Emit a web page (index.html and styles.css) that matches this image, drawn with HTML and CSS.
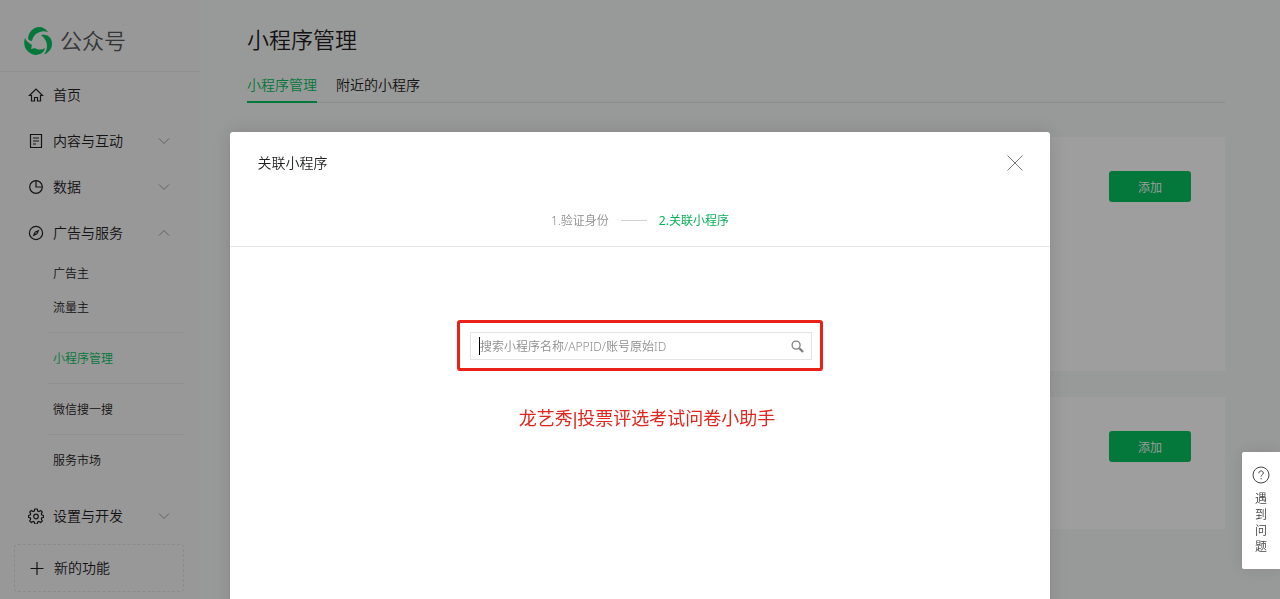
FILE: index.html
```
<!DOCTYPE html>
<html lang="zh-CN">

<head>
     <meta charset="UTF-8">
     <meta name="viewport" content="width=device-width, initial-scale=1.0">
     <title>公众号</title>
     <link rel="stylesheet" href="styles.css">
</head>

<body>

     <div class="layout">
          <aside class="sidebar">
               <a class="logo" href="#">
                    <svg class="logo-icon" viewBox="0 0 28 28">
                         <path d="M4 11C5 4 10 0 15 0c4 0 7 2 9 5-3-1-6-1-8 0C12 6 9 9 8 14 6 14 4 13 4 11z" />
                         <path d="M17 8c4-1 8 0 10 4 2 5 1 10-3 13-1 1-2 2-4 2 2-2 3-5 3-8 0-4-2-8-6-11z" />
                         <path d="M1 11c-2 7 0 12 5 15 4 3 9 2 12 0 2-2 3-4 3-5-3 2-7 2-10 0l-4 1 1-4C5 16 2 14 1 11z" />
                    </svg>
                    <span>公众号</span>
               </a>

               <nav>
                    <a class="menu-item" href="#">
                         <svg class="menu-icon" viewBox="0 0 16 16">
                              <path d="M1.500 8.500 8 2l6.500 6.500H12.500V14H9.500V10.500H6.500V14H3.500V8.500z" />
                         </svg>
                         <span>首页</span>
                    </a>
                    <a class="menu-item" href="#">
                         <svg class="menu-icon" viewBox="0 0 16 16">
                              <path d="M2.500 1.500h11v13h-11zM5 5h6M5 8h6M5 11h3" />
                         </svg>
                         <span>内容与互动</span>
                         <svg class="arrow" viewBox="0 0 12 8"><path d="M1 1.500 6 6.500 11 1.500" /></svg>
                    </a>
                    <a class="menu-item" href="#">
                         <svg class="menu-icon" viewBox="0 0 16 16">
                              <circle cx="8" cy="8" r="6.300" />
                              <path d="M8 1.700V8h6.300" />
                         </svg>
                         <span>数据</span>
                         <svg class="arrow" viewBox="0 0 12 8"><path d="M1 1.500 6 6.500 11 1.500" /></svg>
                    </a>
                    <a class="menu-item" href="#">
                         <svg class="menu-icon" viewBox="0 0 16 16">
                              <circle cx="8" cy="8" r="6.600" />
                              <path class="fill" d="M11.500 4.500 9.300 9.300 4.500 11.500 6.700 6.700z" />
                              <circle class="dot" cx="8" cy="8" r="0.800" />
                         </svg>
                         <span>广告与服务</span>
                         <svg class="arrow" viewBox="0 0 12 8"><path d="M1 6.500 6 1.500 11 6.500" /></svg>
                    </a>

                    <div class="sub-menu">
                         <div class="sub-group">
                              <a class="sub-item" href="#">广告主</a>
                              <a class="sub-item" href="#">流量主</a>
                         </div>
                         <div class="sub-group">
                              <a class="sub-item active" href="#">小程序管理</a>
                         </div>
                         <div class="sub-group">
                              <a class="sub-item" href="#">微信搜一搜</a>
                         </div>
                         <div class="sub-group">
                              <a class="sub-item" href="#">服务市场</a>
                         </div>
                    </div>

                    <a class="menu-item" href="#">
                         <svg class="menu-icon" viewBox="0 0 16 16">
                              <path d="M6.800 1h2.400l.5 2 1.200.500 1.800-1.100 1.600 1.700-1 1.700.5 1.200 1.900.500v1.800l-1.900.500-.5 1.200 1 1.800-1.600 1.600-1.800-1-1.200.500-.5 2.100H6.800l-.5-2.100-1.200-.500-1.800 1-1.600-1.600 1-1.800-.5-1.200-1.900-.500V7.500L2.200 7l.5-1.200-1-1.700 1.600-1.700 1.800 1.100L6.300 3z" />
                              <circle cx="8" cy="8.500" r="2.300" />
                         </svg>
                         <span>设置与开发</span>
                         <svg class="arrow" viewBox="0 0 12 8"><path d="M1 1.500 6 6.500 11 1.500" /></svg>
                    </a>
                    <a class="new-feature" href="#">
                         <svg class="menu-icon" viewBox="0 0 16 16"><path d="M8 2v13M1.500 8.500h13" /></svg>
                         <span>新的功能</span>
                    </a>
               </nav>
          </aside>

          <main class="main">
               <h1 class="page-title">小程序管理</h1>
               <div class="tabs">
                    <a class="tab active" href="#">小程序管理</a>
                    <a class="tab" href="#">附近的小程序</a>
               </div>
               <section class="card card-large">
                    <button class="btn-add" type="button">添加</button>
               </section>
               <section class="card">
                    <button class="btn-add" type="button">添加</button>
               </section>
          </main>
     </div>

     <div class="mask">
          <div class="dialog" role="dialog" aria-labelledby="dialog-title">
               <div class="dialog-header">
                    <h2 id="dialog-title">关联小程序</h2>
                    <button class="btn-close" type="button" aria-label="关闭">
                         <svg viewBox="0 0 16 16"><path d="M.5.5l15 15M15.500.5l-15 15" /></svg>
                    </button>
               </div>

               <div class="steps">
                    <span>1.验证身份</span>
                    <span class="step-line"></span>
                    <span class="current">2.关联小程序</span>
               </div>

               <div class="dialog-body">
                    <div class="highlight">
                         <div class="search-box">
                              <input class="search-input" type="text" placeholder="搜索小程序名称/APPID/账号原始ID" aria-label="搜索小程序">
                              <button class="btn-search" type="button" aria-label="搜索">
                                   <svg viewBox="0 0 14 14">
                                        <circle cx="5.500" cy="5.500" r="4.300" />
                                        <path class="handle" d="M9 9l4 4" />
                                   </svg>
                              </button>
                         </div>
                    </div>
                    <p class="note">龙艺秀|投票评选考试问卷小助手</p>
               </div>
          </div>
     </div>

     <a class="help" href="#">
          <svg viewBox="0 0 18 18">
               <circle cx="9" cy="9" r="8" />
               <path d="M6.800 7.200c0-3 4.500-3 4.500-.2 0 1.600-2.200 1.800-2.200 3.600M9.100 12v1.300" />
          </svg>
          <span>遇到问题</span>
     </a>

</body>

</html>
```
FILE: styles.css
```
* {
     box-sizing: border-box;
     margin: 0;
     padding: 0;
}

body {
     height: 100vh;
     overflow: hidden;
     font-family: "Noto Sans", "Noto Sans CJK SC", sans-serif;
     font-size: 14px;
     font-weight: 350;
     color: #1f2021;
     background-color: #f6f8f7;
}

a {
     color: inherit;
     text-decoration: none;
}

button,
input {
     font-family: inherit;
     font-weight: inherit;
}

button {
     border: none;
     background: none;
     cursor: pointer;
}

svg {
     display: block;
     fill: none;
     stroke: currentColor;
}

.layout {
     display: flex;
}

/* sidebar */
.sidebar {
     flex: 0 0 200px;
     min-height: 100vh;
     background-color: #f5f6f7;
}

.logo {
     display: flex;
     align-items: center;
     gap: 8px;
     height: 72px;
     padding: 10px 0 0 24px;
     border-bottom: 1px solid #e7e8e9;
     font-size: 22px;
     color: #55585a;
}

.logo span {
     padding-bottom: 3px;
}

.logo-icon {
     width: 28px;
     height: 28px;
     fill: #07c160;
     stroke: none;
}

.menu-item {
     display: flex;
     align-items: center;
     gap: 9px;
     height: 46px;
     padding: 0 30px 0 28px;
}

.menu-item span {
     padding-bottom: 2px;
}

.menu-icon {
     width: 16px;
     height: 16px;
     stroke-width: 1.2;
}

.menu-icon .fill {
     fill: currentColor;
     stroke: none;
}

.menu-icon .dot {
     fill: #f5f6f7;
     stroke: none;
}

.arrow {
     width: 12px;
     height: 8px;
     margin-left: auto;
     color: #9a9b9c;
}

.sub-menu {
     margin: 0 16px 8px 48px;
     font-size: 12px;
}

.sub-group {
     padding: 9px 0 7px 5px;
     border-top: 1px solid #e7e8e9;
}

.sub-group:first-child {
     padding-top: 1px;
     border-top: none;
}

.sub-item {
     display: block;
     line-height: 34px;
}

.sub-item.active {
     color: #07c160;
}

.new-feature {
     display: flex;
     align-items: center;
     gap: 9px;
     height: 48px;
     margin: 5px 16px 0 14px;
     padding-left: 14px;
     border: 1px dashed #dfe0e1;
     border-radius: 4px;
}

.new-feature span {
     padding-bottom: 2px;
}

/* main */
.main {
     flex: 1;
     padding: 23px 55px 0 47px;
}

.page-title {
     font-size: 22px;
     font-weight: 350;
     line-height: 32px;
}

.tabs {
     display: flex;
     gap: 19px;
     margin-top: 13px;
     border-bottom: 1px solid #e0e2e1;
}

.tab {
     height: 35px;
     margin-bottom: -1px;
     line-height: 33px;
}

.tab.active {
     color: #07c160;
     border-bottom: 2px solid #07c160;
}

.card {
     display: flex;
     justify-content: flex-end;
     align-items: flex-start;
     min-height: 132px;
     margin-top: 26px;
     padding: 34px;
     background-color: #fff;
}

.card-large {
     min-height: 234px;
     margin-top: 34px;
}

.btn-add {
     width: 82px;
     height: 31px;
     border-radius: 3px;
     font-size: 12px;
     color: #fff;
     background-color: #07c160;
}

/* dialog */
.mask {
     position: fixed;
     inset: 0;
     padding-top: 132px;
     overflow: hidden;
     background-color: rgba(0, 0, 0, .38);
}

.dialog {
     width: 64%;
     min-height: 100vh;
     margin: 0 auto;
     border-radius: 3px;
     background-color: #fff;
     box-shadow: 0 0 20px rgba(0, 0, 0, .15);
}

.dialog-header {
     display: flex;
     justify-content: space-between;
     align-items: center;
     height: 62px;
     padding: 0 27px;
}

.dialog-header h2 {
     padding-bottom: 2px;
     font-size: 14px;
     font-weight: 350;
}

.btn-close svg {
     width: 16px;
     height: 16px;
     color: #777;
}

.steps {
     display: flex;
     justify-content: center;
     align-items: center;
     gap: 12px;
     height: 53px;
     border-bottom: 1px solid #e7e7e7;
     font-size: 12px;
     color: #8c8c8c;
}

.step-line {
     width: 26px;
     border-top: 1px solid #d0d0d0;
}

.steps .current {
     color: #07b159;
     font-weight: 400;
}

.dialog-body {
     display: flex;
     flex-direction: column;
     align-items: center;
     padding-top: 73px;
}

.highlight {
     width: 366px;
     padding: 9px 8px 8px 10px;
     border: 3px solid #ea2019;
     border-radius: 3px;
}

.search-box {
     display: flex;
     align-items: center;
     height: 28px;
     border: 1px solid #e4e4e4;
}

/* text cursor of the empty field */
.search-box::before {
     content: "";
     width: 1px;
     height: 18px;
     margin-left: 8px;
     background-color: #000;
}

.search-input {
     flex: 1;
     min-width: 0;
     height: 26px;
     border: none;
     outline: none;
     font-size: 12px;
}

.search-input::placeholder {
     color: #8c8c8c;
}

.btn-search {
     padding: 0 7px;
}

.btn-search svg {
     width: 13px;
     height: 13px;
     color: #808080;
     stroke-width: 1.4;
}

.btn-search .handle {
     stroke-width: 2.4;
}

.note {
     margin-top: 34px;
     padding-left: 14px;
     font-family: "Liberation Sans", "Noto Sans CJK SC", sans-serif;
     font-size: 18px;
     font-weight: 400;
     line-height: 28px;
     color: #e0261e;
}

/* help tab */
.help {
     position: fixed;
     right: 0;
     top: 452px;
     display: flex;
     flex-direction: column;
     align-items: center;
     gap: 7px;
     width: 38px;
     padding: 14px 0;
     border-radius: 2px 0 0 2px;
     font-size: 12px;
     line-height: 16px;
     color: #444;
     background-color: #fff;
     box-shadow: 0 0 16px rgba(0, 0, 0, .12);
}

.help svg {
     width: 18px;
     height: 18px;
}

.help span {
     width: 12px;
}
```
